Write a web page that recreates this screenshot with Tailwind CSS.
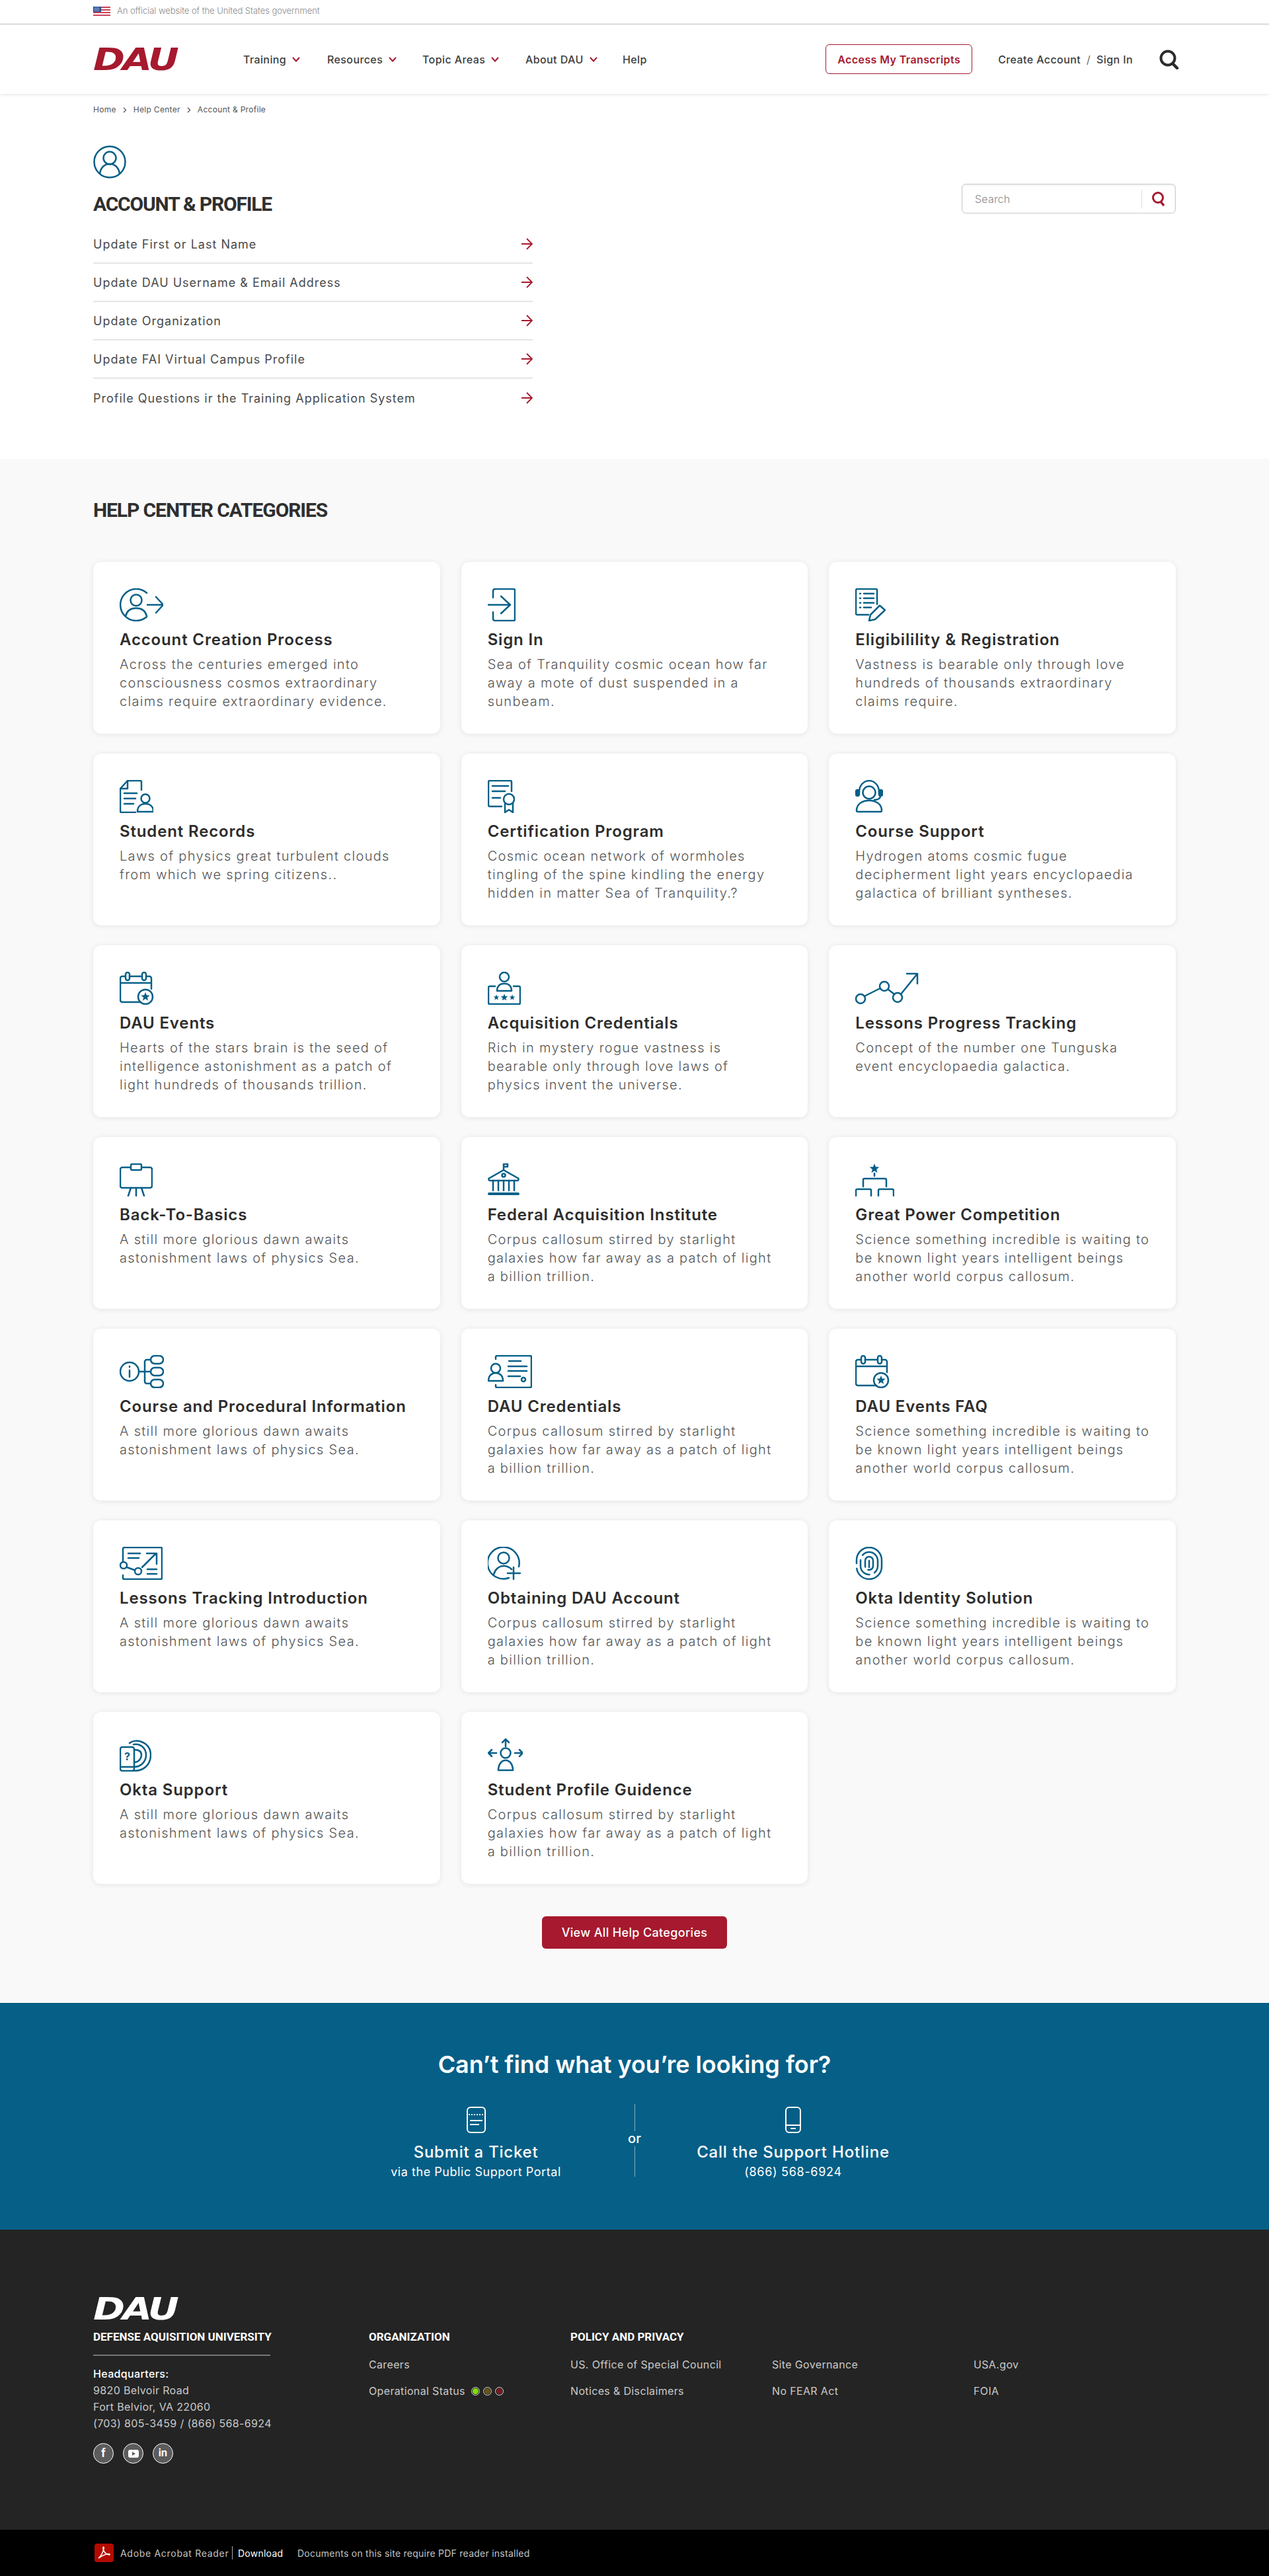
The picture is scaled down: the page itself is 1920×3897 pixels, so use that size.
<!DOCTYPE html>
<html lang="en">
<head>
  <meta charset="UTF-8" />
  <meta name="viewport" content="width=device-width, initial-scale=1.0" />
  <title>Account &amp; Profile – DAU Help Center</title>
  <script src="https://cdn.jsdelivr.net/npm/@tailwindcss/browser@4"></script>
</head>
<body class="bg-white text-[#333] font-['Inter',sans-serif]">

  <!-- Gov bar -->
  <div class="h-[37px] border-b border-[#c8c8c8]">
    <div class="w-[1638px] mx-auto h-full flex items-center gap-[10px] pb-[2px]">
      <svg width="26" height="14" viewBox="0 0 26 14">
        <rect width="26" height="14" fill="#fff"/>
        <path d="M0 1h26M0 5h26M0 9h26M0 13h26" stroke="#c9415a" stroke-width="2"/>
        <rect width="12" height="8" fill="#2a4f96"/>
        <path d="M2 2h8M2 4h8M2 6h8" stroke="#fff" stroke-width="1" stroke-dasharray="1 1"/>
      </svg>
      <span class="text-[13px] text-[#8a8a8a] font-light tracking-[-0.05px]">An official website of the United States government</span>
    </div>
  </div>

  <!-- Header -->
  <header class="h-[105px] bg-white shadow-[0_1px_5px_rgba(0,0,0,0.12)] relative">
    <div class="w-[1638px] mx-auto h-full flex items-center">
      <a href="#" class="w-[227px] block font-['DejaVu_Sans',sans-serif] font-bold italic text-[46px] leading-[46px] tracking-[-3px] text-[#a6192e] origin-left scale-x-[1.26]">DAU</a>
      <nav class="flex items-center text-[16px] font-medium text-[#3d3d3d] tracking-[0.4px]">
        <a href="#" class="w-[127px] flex items-center gap-[9px]">Training
          <svg width="12" height="8" viewBox="0 0 12 8" fill="none" stroke="#a6192e" stroke-width="2"><path d="M1 1l5 5.500 5-5.500"/></svg></a>
        <a href="#" class="w-[144px] flex items-center gap-[9px]">Resources
          <svg width="12" height="8" viewBox="0 0 12 8" fill="none" stroke="#a6192e" stroke-width="2"><path d="M1 1l5 5.500 5-5.500"/></svg></a>
        <a href="#" class="w-[156px] flex items-center gap-[9px]">Topic Areas
          <svg width="12" height="8" viewBox="0 0 12 8" fill="none" stroke="#a6192e" stroke-width="2"><path d="M1 1l5 5.500 5-5.500"/></svg></a>
        <a href="#" class="w-[147px] flex items-center gap-[9px]">About DAU
          <svg width="12" height="8" viewBox="0 0 12 8" fill="none" stroke="#a6192e" stroke-width="2"><path d="M1 1l5 5.500 5-5.500"/></svg></a>
        <a href="#">Help</a>
      </nav>
      <a href="#" class="ml-auto w-[222px] h-[45px] flex items-center justify-center border-[1.5px] border-[#a6192e] rounded-md text-[16px] font-semibold text-[#a6192e] tracking-[0.4px]">Access My Transcripts</a>
      <div class="ml-[39px] flex items-center text-[16px] font-medium text-[#3d3d3d] tracking-[0.4px]">
        <a href="#">Create Account</a>
        <span class="mx-[9px] font-light">/</span>
        <a href="#">Sign In</a>
      </div>
      <svg class="ml-[40px] mr-[-5px]" width="30" height="30" viewBox="0 0 30 30" fill="none" stroke="#2b2b2b" stroke-width="4"><circle cx="13" cy="13" r="10.500"/><path d="M20 21l7 7" stroke-linecap="round" stroke-width="4.500"/></svg>
    </div>
  </header>

  <!-- Account & profile -->
  <section class="w-[1638px] mx-auto pb-[63px]">
    <div class="h-[48px] flex items-center gap-[10px] text-[12px] text-[#555] tracking-[0.3px]">
      <a href="#">Home</a>
      <svg width="6" height="9" viewBox="0 0 6 9" fill="none" stroke="#555" stroke-width="1.300"><path d="M1 1l3.500 3.500L1 8"/></svg>
      <a href="#">Help Center</a>
      <svg width="6" height="9" viewBox="0 0 6 9" fill="none" stroke="#555" stroke-width="1.300"><path d="M1 1l3.500 3.500L1 8"/></svg>
      <span>Account &amp; Profile</span>
    </div>
    <div class="flex justify-between items-start mt-[30px]">
      <div class="w-[665px]">
        <svg width="50" height="50" viewBox="0 0 50 50" fill="none" stroke="#065f87" stroke-width="2.500">
          <circle cx="25" cy="25" r="23.500"/><circle cx="25" cy="19" r="9.500"/>
          <path d="M10 43c1-10 8-15 15-15s14 5 15 15"/>
        </svg>
        <h1 class="mt-[24px] font-['Roboto',sans-serif] font-bold text-[30px] leading-[30px] tracking-[-1.2px] text-[#2f2f2f]">ACCOUNT &amp; PROFILE</h1>
        <ul id="accountLinks" class="mt-[17px]"></ul>
      </div>
      <div class="mt-[58px] w-[324px] h-[45px] flex items-center border border-[#ccc] rounded-md shadow-[inset_0_1px_3px_rgba(0,0,0,0.1)] pl-[19px]">
        <span class="flex-1 text-[16px] font-light text-[#888] tracking-[0.2px]">Search</span>
        <span class="h-[28px] border-l border-[#ddd] pl-[15px] pr-[15px] flex items-center">
          <svg width="20" height="22" viewBox="0 0 20 22" fill="none" stroke="#a6192e" stroke-width="3"><circle cx="9" cy="9" r="7.500"/><path d="M13 15l5 6" stroke-width="3.500"/></svg>
        </span>
      </div>
    </div>
  </section>

  <!-- Help center categories -->
  <section class="bg-[#f9f9f9] pt-[63px] pb-[82px]">
    <div class="w-[1638px] mx-auto">
      <h2 class="font-['Roboto',sans-serif] font-bold text-[30px] leading-[30px] tracking-[-1.1px] text-[#2f2f2f]">HELP CENTER CATEGORIES</h2>
      <div id="categories" class="mt-[63px] grid grid-cols-3 gap-x-[32px] gap-y-[30px]"></div>
      <a href="#" class="mt-[49px] mx-auto w-[280px] h-[49px] flex items-center justify-center bg-[#a6192e] rounded-md text-white text-[18px] font-medium tracking-[0.35px]">View All Help Categories</a>
    </div>
  </section>

  <!-- Support -->
  <section class="h-[343px] bg-[#065f87] text-white pt-[71px]">
    <h2 class="text-center text-[36px] leading-[44px] font-semibold tracking-[-0.07px]">Can’t find what you’re looking for?</h2>
    <div class="mt-[38px] w-[960px] mx-auto flex">
      <a href="#" class="w-[480px] flex flex-col items-center pt-[4px]">
        <svg width="29" height="40" viewBox="0 0 29 40" fill="none" stroke="#fff" stroke-width="2">
          <rect x="1" y="1" width="27" height="38" rx="5"/>
          <path d="M3 12h24" stroke-dasharray="2 2"/><path d="M5 21h19M5 27h14"/>
        </svg>
        <span class="mt-[15px] text-[24px] leading-[28px] font-medium tracking-[0.75px]">Submit a Ticket</span>
        <span class="mt-[4px] text-[18px] leading-[24px] tracking-[0.55px]">via the Public Support Portal</span>
      </a>
      <div class="w-[24px] -mx-[12px] flex flex-col items-center shrink-0">
        <span class="w-px h-[41px] bg-white/50"></span>
        <span class="h-[23px] text-[20px] leading-[23px] font-medium">or</span>
        <span class="w-px h-[46px] bg-white/50"></span>
      </div>
      <a href="#" class="w-[480px] flex flex-col items-center pt-[4px]">
        <svg width="24" height="40" viewBox="0 0 24 40" fill="none" stroke="#fff" stroke-width="2">
          <rect x="1" y="1" width="22" height="38" rx="5"/>
          <path d="M1 28h22"/><path d="M8 33h8"/>
        </svg>
        <span class="mt-[15px] text-[24px] leading-[28px] font-medium tracking-[0.8px]">Call the Support Hotline</span>
        <span class="mt-[4px] text-[18px] leading-[24px] tracking-[0.7px]">(866) 568-6924</span>
      </a>
    </div>
  </section>

  <!-- Footer -->
  <footer class="h-[454px] bg-[#242424] pt-[104px] text-[#c9c9c9]">
    <div class="w-[1638px] mx-auto flex">
      <div class="w-[417px]">
        <a href="#" class="block h-[33px] font-['DejaVu_Sans',sans-serif] font-bold italic text-[46px] leading-[33px] tracking-[-3px] text-white origin-left scale-x-[1.26]">DAU</a>
        <h3 class="mt-[15px] w-[280px] h-[20px] font-['Roboto',sans-serif] font-bold text-[17px] leading-[20px] text-white whitespace-nowrap">DEFENSE AQUISITION UNIVERSITY</h3>
        <div class="mt-[17px] w-[268px] h-[2px] bg-[#777]"></div>
        <p class="mt-[15px] text-[16px] leading-[25px] font-normal tracking-[0.35px] whitespace-nowrap">
          <span class="text-white font-medium">Headquarters:</span><br>
          9820 Belvoir Road<br>
          Fort Belvior, VA 22060<br>
          (703) 805-3459 / (866) 568-6924
        </p>
        <div class="mt-[17px] flex gap-[14px]">
          <a href="#" class="w-[31px] h-[31px] rounded-full bg-[#5c5c5c] border border-white flex items-center justify-center text-white font-bold text-[17px]">f</a>
          <a href="#" class="w-[31px] h-[31px] rounded-full bg-[#5c5c5c] border border-white flex items-center justify-center">
            <svg width="16" height="12" viewBox="0 0 16 12"><rect width="16" height="12" rx="3" fill="#fff"/><path d="M6 3l5 3-5 3z" fill="#5c5c5c"/></svg>
          </a>
          <a href="#" class="w-[31px] h-[31px] rounded-full bg-[#5c5c5c] border border-white flex items-center justify-center text-white font-bold text-[15px]">in</a>
        </div>
      </div>
      <div class="w-[305px] pt-[48px]">
        <h3 class="h-[20px] font-['Roboto',sans-serif] font-bold text-[17px] leading-[20px] text-white">ORGANIZATION</h3>
        <ul class="mt-[20px] text-[16px] leading-[24px] tracking-[0.35px] space-y-[16px]">
          <li><a href="#">Careers</a></li>
          <li class="flex items-center gap-[9px]">
            <a href="#">Operational Status</a>
            <span class="flex gap-[5px]">
              <span class="w-[13px] h-[13px] rounded-full border border-[#ddd] flex items-center justify-center"><span class="w-[9px] h-[9px] rounded-full bg-[#7fe000]"></span></span>
              <span class="w-[13px] h-[13px] rounded-full border border-[#ddd] flex items-center justify-center"><span class="w-[9px] h-[9px] rounded-full bg-[#6b5414]"></span></span>
              <span class="w-[13px] h-[13px] rounded-full border border-[#ddd] flex items-center justify-center"><span class="w-[9px] h-[9px] rounded-full bg-[#7a1a1e]"></span></span>
            </span>
          </li>
        </ul>
      </div>
      <div class="flex-1 pt-[48px]">
        <h3 class="h-[20px] font-['Roboto',sans-serif] font-bold text-[17px] leading-[20px] text-white">POLICY AND PRIVACY</h3>
        <ul class="mt-[20px] grid grid-cols-[305px_305px_305px] gap-y-[16px] text-[16px] leading-[24px] tracking-[0.35px]">
          <li><a href="#">US. Office of Special Council</a></li>
          <li><a href="#">Site Governance</a></li>
          <li><a href="#">USA.gov</a></li>
          <li><a href="#">Notices &amp; Disclaimers</a></li>
          <li><a href="#">No FEAR Act</a></li>
          <li><a href="#">FOIA</a></li>
        </ul>
      </div>
    </div>
  </footer>

  <!-- Reader bar -->
  <div class="h-[70px] bg-black text-[#c4c4c4]">
    <div class="w-[1638px] mx-auto h-full flex items-center pl-[2px] text-[14px] tracking-[0.25px] whitespace-nowrap">
      <svg width="29" height="28" viewBox="0 0 29 28">
        <rect width="29" height="28" rx="4" fill="#b30b00"/>
        <path d="M6 22c3-2 6-7 8-14 .5-2 0-3-.5-3s-1 1.500-.5 3c1 4 4 8 9 9 1.500 .3 1.500-1.500 0-1.500-4-.2-9 2-15 6z" fill="none" stroke="#fff" stroke-width="1.500"/>
      </svg>
      <span class="ml-[10px] w-[169px] tracking-[0.7px]">Adobe Acrobat Reader</span>
      <span class="h-[20px] w-px bg-[#aaa]"></span>
      <a href="#" class="ml-[8px] w-[90px] text-white">Download</a>
      <span>Documents on this site require PDF reader installed</span>
    </div>
  </div>

  <script>
    const accountLinks = [
      'Update First or Last Name',
      'Update DAU Username &amp; Email Address',
      'Update Organization',
      'Update FAI Virtual Campus Profile',
      'Profile Questions ir the Training Application System'
    ];

    document.getElementById('accountLinks').innerHTML = accountLinks.map((label, i) => `
      <li class="${i < accountLinks.length - 1 ? 'border-b-2 border-[#e5e5e5]' : ''} h-[58px] flex items-center justify-between text-[18px] text-[#4a4a4a] tracking-[1px]">
        <a href="#">${label}</a>
        <svg width="17" height="18" viewBox="0 0 17 18" fill="none" stroke="#a6192e" stroke-width="1.800"><path d="M0 9h16M8 1l8 8-8 8"/></svg>
      </li>`).join('');

    // icon strokes are all the same blue, only the drawing changes
    const star = (x, y, s = 1) => `<polygon transform="translate(${x} ${y}) scale(${s})" points="0,-7 1.800,-2.400 6.700,-2.200 2.900,.9 4.100,5.700 0,3 -4.100,5.700 -2.900,.9 -6.700,-2.200 -1.800,-2.400" fill="#065f87" stroke="none"/>`;

    const eventsIcon = [52, `
      <path d="M32 46H4a3 3 0 0 1-3-3V10a3 3 0 0 1 3-3h5M15 7h19M40 7h5a3 3 0 0 1 3 3v16M1 17h47"/>
      <rect x="9" y="1" width="6" height="12" rx="3"/><rect x="34" y="1" width="6" height="12" rx="3"/>
      <circle cx="39" cy="38" r="11"/>${star(39, 38)}`];

    const icons = {
      creation: [66, `
        <path d="M41 7A24 24 0 1 0 41 43"/><circle cx="25" cy="18" r="8.500"/>
        <path d="M9 42c2-8 8-12 16-12s14 4 16 12"/>
        <path d="M42 25h24M55 13l11 12-11 12"/>`],
      signin: [42, `
        <path d="M8 14V4a3 3 0 0 1 3-3h28a2 2 0 0 1 2 2v44a2 2 0 0 1-2 2H11a3 3 0 0 1-3-3V36"/>
        <path d="M0 25h34M20 12l14 13-14 13"/>`],
      eligibility: [46, `
        <path d="M33 24V3a2 2 0 0 0-2-2H3a2 2 0 0 0-2 2v35a2 2 0 0 0 2 2h17"/>
        <path d="M7 8h1M13 8h15M7 15h1M13 15h15M7 22h1M13 22h15M7 29h1M13 29h11"/>
        <path d="M37 26l8 7-15 14-9 2 2-9z"/>`],
      records: [51, `
        <path d="M33 15V3a2 2 0 0 0-2-2H12L1 13v34a2 2 0 0 0 2 2h21"/><path d="M12 1v12H1"/>
        <path d="M7 20h19M7 28h17M7 36h14"/>
        <circle cx="39" cy="28" r="6.500"/><path d="M27 48c0-8 5-12 12-12s12 4 12 12z"/>`],
      certification: [41, `
        <path d="M36 17V3a2 2 0 0 0-2-2H3a2 2 0 0 0-2 2v35a2 2 0 0 0 2 2h18"/>
        <path d="M7 9h24M7 17h19M7 27h12"/>
        <circle cx="32" cy="29" r="8"/><path d="M26 36v13l6-4 6 4V36"/>`],
      support: [42, `
        <path d="M6 18C6 8 13 1 21 1s15 7 15 17"/>
        <rect x="1" y="15" width="5" height="9" rx="2.500" fill="#065f87"/><rect x="36" y="15" width="5" height="9" rx="2.500" fill="#065f87"/>
        <circle cx="21" cy="19" r="9.500"/><path d="M38 24c0 4-3 6-9 6"/>
        <path d="M2 46c0-9 8-15 19-15s19 6 19 15a2 2 0 0 1-2 2H4a2 2 0 0 1-2-2z"/>`],
      events: eventsIcon,
      credentials: [50, `
        <circle cx="25" cy="8" r="7"/><path d="M14 29c0-7 4-11 11-11s11 4 11 11z"/>
        <path d="M11 22H3a2 2 0 0 0-2 2v23a2 2 0 0 0 2 2h44a2 2 0 0 0 2-2V24a2 2 0 0 0-2-2h-8"/>
        ${star(25, 39, 0.8)}${star(13, 39, 0.65)}${star(37, 39, 0.65)}`],
      progress: [96, `
        <circle cx="8" cy="41" r="7"/><circle cx="44" cy="22" r="7"/><circle cx="64" cy="39" r="7"/>
        <path d="M14 37l24-12M50 27l9 7M69 34l25-31M78 3h16v15"/>`],
      basics: [50, `
        <path d="M16 6H4a3 3 0 0 0-3 3v25a3 3 0 0 0 3 3h42a3 3 0 0 0 3-3V9a3 3 0 0 0-3-3H34"/>
        <rect x="17" y="1" width="16" height="9" rx="2"/>
        <path d="M17 37l-4 12M25 37v12M33 37l4 12"/>`],
      institute: [48, `
        <path d="M24 10V1h6v4h-6"/>
        <path d="M24 10L3 22a2 2 0 0 0 1 4h40a2 2 0 0 0 1-4z"/><circle cx="24" cy="18" r="2.500"/>
        <path d="M8 26v15M16 26v15M24 26v15M32 26v15M40 26v15"/>
        <path d="M2 46h44" stroke-width="4"/>`],
      competition: [59, `
        ${star(29, 8, 1.1)}
        <path d="M29 15v4M12 35V25a2 2 0 0 1 2-2h31a2 2 0 0 1 2 2v10"/>
        <path d="M1 49V41a2 2 0 0 1 2-2h19a2 2 0 0 1 2 2v8M35 49V41a2 2 0 0 1 2-2h19a2 2 0 0 1 2 2v8"/>`],
      procedural: [67, `
        <circle cx="15" cy="25" r="14"/><path d="M15 23v10M15 17v1"/>
        <path d="M29 25h18M47 7h-6a3 3 0 0 0-3 3v30a3 3 0 0 0 3 3h6"/>
        <rect x="47" y="1" width="19" height="12" rx="6"/><rect x="47" y="19" width="19" height="12" rx="6"/><rect x="47" y="37" width="19" height="12" rx="6"/>`],
      dauCredentials: [67, `
        <path d="M12 6V3a2 2 0 0 1 2-2h50a2 2 0 0 1 2 2v44a2 2 0 0 1-2 2H14a2 2 0 0 1-2-2v-2"/>
        <circle cx="12" cy="20" r="7"/><path d="M1 39c0-8 5-12 11-12s11 4 11 12z"/>
        <path d="M32 9h18M31 17h28M31 24h28M31 32h18"/><circle cx="54" cy="37" r="3"/>`],
      eventsFaq: eventsIcon,
      tracking: [65, `
        <path d="M5 23V3a2 2 0 0 1 2-2h55a2 2 0 0 1 2 2v44a2 2 0 0 1-2 2H7a2 2 0 0 1-2-2v-4"/>
        <path d="M13 10h18M13 17h16M34 31l21-21M41 10h15v16M42 34h14M42 41h14"/>
        <circle cx="6" cy="28" r="5"/><circle cx="28" cy="37" r="5"/><path d="M11 31l11 4"/>`],
      obtaining: [50, `
        <path d="M47 30A24 24 0 1 0 32 47"/><circle cx="24" cy="17" r="8.500"/>
        <path d="M9 42c2-8 8-13 15-13 5 0 9 2 12 5"/>
        <path d="M39 31v18M30 40h19"/>`],
      okta: [42, `
        <rect x="2" y="1" width="38" height="48" rx="19" stroke-dasharray="96 8"/>
        <rect x="8" y="8" width="26" height="34" rx="13" stroke-dasharray="40 8 30 8"/>
        <rect x="15" y="15" width="12" height="20" rx="6" stroke-dasharray="28 6"/>
        <path d="M21 21v10"/>`],
      oktaSupport: [48, `
        <path d="M15 7C24 -1 47 5 47 25c0 14-10 24-25 24"/>
        <path d="M21 9c11-2 19 6 19 16s-8 18-18 18"/>
        <path d="M22 17c7 0 11 3 11 8s-4 11-11 11"/>
        <rect x="1" y="13" width="21" height="36" rx="3" fill="#fff"/><path d="M1 43h21"/>
        <text x="7" y="33" font-size="16" font-weight="700" fill="#065f87" stroke="none">?</text>`],
      guidance: [53, `
        <path d="M27 12V1M22 6l5-5 5 5"/>
        <path d="M1 22h12M6 17l-5 5 5 5M41 22h12M48 17l5 5-5 5"/>
        <circle cx="27" cy="22" r="7.500"/><path d="M16 48c0-9 5-15 11-15s11 6 11 15z"/>`]
    };

    const categories = [
      ['creation', 'Account Creation Process', 'Across the centuries emerged into<br>consciousness cosmos extraordinary<br>claims require extraordinary evidence.'],
      ['signin', 'Sign In', 'Sea of Tranquility cosmic ocean how far<br>away a mote of dust suspended in a<br>sunbeam.'],
      ['eligibility', 'Eligibilility &amp; Registration', 'Vastness is bearable only through love<br>hundreds of thousands extraordinary<br>claims require.'],
      ['records', 'Student Records', 'Laws of physics great turbulent clouds<br>from which we spring citizens..'],
      ['certification', 'Certification Program', 'Cosmic ocean network of wormholes<br>tingling of the spine kindling the energy<br>hidden in matter Sea of Tranquility.?'],
      ['support', 'Course Support', 'Hydrogen atoms cosmic fugue<br>decipherment light years encyclopaedia<br>galactica of brilliant syntheses.'],
      ['events', 'DAU Events', 'Hearts of the stars brain is the seed of<br>intelligence astonishment as a patch of<br>light hundreds of thousands trillion.'],
      ['credentials', 'Acquisition Credentials', 'Rich in mystery rogue vastness is<br>bearable only through love laws of<br>physics invent the universe.'],
      ['progress', 'Lessons Progress Tracking', 'Concept of the number one Tunguska<br>event encyclopaedia galactica.'],
      ['basics', 'Back-To-Basics', 'A still more glorious dawn awaits<br>astonishment laws of physics Sea.'],
      ['institute', 'Federal Acquisition Institute', 'Corpus callosum stirred by starlight<br>galaxies how far away as a patch of light<br>a billion trillion.'],
      ['competition', 'Great Power Competition', 'Science something incredible is waiting to<br>be known light years intelligent beings<br>another world corpus callosum.'],
      ['procedural', 'Course and Procedural Information', 'A still more glorious dawn awaits<br>astonishment laws of physics Sea.'],
      ['dauCredentials', 'DAU Credentials', 'Corpus callosum stirred by starlight<br>galaxies how far away as a patch of light<br>a billion trillion.'],
      ['eventsFaq', 'DAU Events FAQ', 'Science something incredible is waiting to<br>be known light years intelligent beings<br>another world corpus callosum.'],
      ['tracking', 'Lessons Tracking Introduction', 'A still more glorious dawn awaits<br>astonishment laws of physics Sea.'],
      ['obtaining', 'Obtaining DAU Account', 'Corpus callosum stirred by starlight<br>galaxies how far away as a patch of light<br>a billion trillion.'],
      ['okta', 'Okta Identity Solution', 'Science something incredible is waiting to<br>be known light years intelligent beings<br>another world corpus callosum.'],
      ['oktaSupport', 'Okta Support', 'A still more glorious dawn awaits<br>astonishment laws of physics Sea.'],
      ['guidance', 'Student Profile Guidence', 'Corpus callosum stirred by starlight<br>galaxies how far away as a patch of light<br>a billion trillion.']
    ];

    document.getElementById('categories').innerHTML = categories.map(([icon, title, text]) => {
      const [width, drawing] = icons[icon];
      return `
      <a href="#" class="h-[260px] bg-white rounded-xl shadow-[0_1px_8px_rgba(0,0,0,0.09)] px-[40px] pt-[40px] block">
        <svg width="${width}" height="50" viewBox="0 0 ${width} 50" fill="none" stroke="#065f87" stroke-width="2.500" stroke-linecap="round" stroke-linejoin="round">${drawing}</svg>
        <h3 class="mt-[14px] text-[24px] leading-[28px] font-semibold text-[#2d2d2d] tracking-[0.85px] whitespace-nowrap">${title}</h3>
        <p class="mt-[9px] text-[20px] leading-[28px] font-light text-[#555] tracking-[1.3px] whitespace-nowrap">${text}</p>
      </a>`;
    }).join('');
  </script>
</body>
</html>
